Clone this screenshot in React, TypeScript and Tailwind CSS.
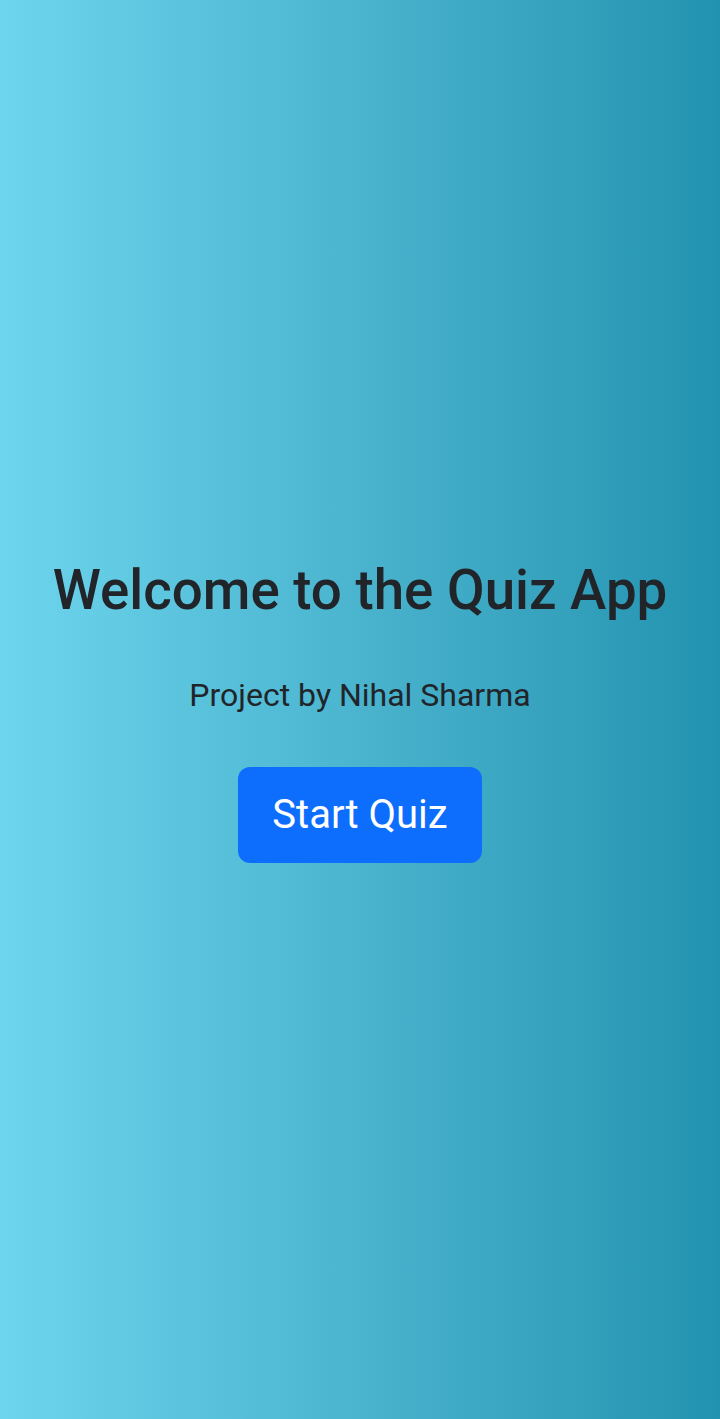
const App = () => {
  return (
    <div
      className="min-h-screen flex flex-col items-center justify-center pt-[2px] bg-gradient-to-r from-[#6dd5ed] to-[#2193b0] text-center"
      style={{ fontFamily: 'Roboto, "Liberation Sans", sans-serif' }}
    >
      <h1 className="text-[54.7px] font-medium leading-[1.2] text-[#212529]">
        Welcome to the Quiz App
      </h1>
      <p className="mt-[47px] text-[32px] leading-[1.5] text-[#212529]">
        Project by Nihal Sharma
      </p>
      <button className="mt-[48px] w-[244px] h-[96px] rounded-[12px] bg-[#0d6efd] text-[40px] text-white">
        Start Quiz
      </button>
    </div>
  );
};

export default App;
